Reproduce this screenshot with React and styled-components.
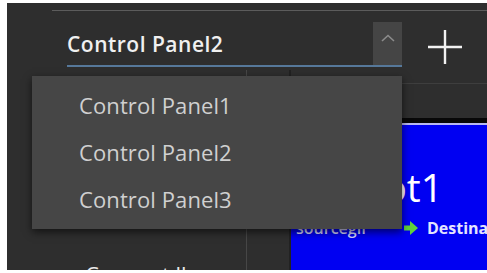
import styled, { createGlobalStyle } from "styled-components";

const Global = createGlobalStyle`
  html, body {
    margin: 0;
    padding: 0;
    background: #fff;
    overflow: hidden;
  }
  body {
    font-family: "Open Sans", "Noto Sans", sans-serif;
  }
`;

const panels = ["Control Panel1", "Control Panel2", "Control Panel3"];

function App() {
  return (
    <>
      <Global />
      <Frame>
        <Header>
          <Combo>
            <ComboText>Control Panel2</ComboText>
            <ChevronBox>
              <svg width="14" height="8" viewBox="0 0 14 8">
                <polyline points="1,7 7,1.5 13,7" fill="none" stroke="#8c8c8c" strokeWidth="1.6" />
              </svg>
            </ChevronBox>
          </Combo>
          <AddButton>
            <svg width="36" height="36" viewBox="0 0 36 36">
              <line x1="18" y1="1" x2="18" y2="35" stroke="#f2f2f2" strokeWidth="2.4" />
              <line x1="1" y1="18" x2="35" y2="18" stroke="#f2f2f2" strokeWidth="2.4" />
            </svg>
          </AddButton>
        </Header>
        <Body>
          <Sidebar>
            <SideLabel>Connect llo</SideLabel>
          </Sidebar>
          <Gutter />
          <Canvas>
            <CanvasTop />
            <BlackBand />
            <Blue>
              <NodeTitle>Robot1</NodeTitle>
              <NodeRoute>
                <Source>sourcegif</Source>
                <Arrow width="14" height="14" viewBox="0 0 14 14">
                  <polygon points="0,4.5 6,4.5 6,0 14,7 6,14 6,9.5 0,9.5" fill="#62d13c" />
                </Arrow>
                <span>Destination</span>
              </NodeRoute>
            </Blue>
          </Canvas>
        </Body>
        <Popup>
          {panels.map((p) => (
            <PopupItem key={p}>{p}</PopupItem>
          ))}
        </Popup>
      </Frame>
    </>
  );
}

const Frame = styled.div`
  position: relative;
  margin: 3px 0 0 7px;
  width: 480px;
  height: 267px;
  background: #2e2e2e;
  display: flex;
  flex-direction: column;
  overflow: hidden;
`;

const Header = styled.div`
  margin: 7px 0 0 45px;
  border-top: 1px solid #5c5c5c;
  padding: 11px 0 0 15px;
  height: 48px;
  display: flex;
  align-items: flex-start;
`;

const Combo = styled.div`
  width: 335px;
  height: 43px;
  border-bottom: 2px solid #56789a;
  display: flex;
  align-items: stretch;
`;

const ComboText = styled.div`
  flex: 1;
  display: flex;
  align-items: center;
  font-size: 21px;
  font-weight: 600;
  color: #f0f0f0;
  letter-spacing: 0.5px;
`;

const ChevronBox = styled.div`
  width: 29px;
  background: #454545;
  display: flex;
  justify-content: center;
  padding-top: 12px;
  box-sizing: border-box;
`;

const AddButton = styled.div`
  margin: 7px 0 0 25px;
  width: 36px;
  height: 36px;
  display: flex;
`;

const Body = styled.div`
  flex: 1;
  display: flex;
  min-height: 0;
`;

const Sidebar = styled.div`
  flex: 0 0 240px;
  border-right: 1px solid #474747;
  display: flex;
  flex-direction: column;
  justify-content: flex-end;
  padding-left: 78px;
  box-sizing: border-box;
  white-space: nowrap;
`;

const SideLabel = styled.div`
  font-size: 22px;
  color: #e8e8e8;
  line-height: 1;
  margin-bottom: -15px;
`;

const Gutter = styled.div`
  flex: 0 0 42px;
  border-right: 2px solid #222;
`;

const Canvas = styled.div`
  flex: 1;
  min-width: 0;
  overflow: hidden;
  display: flex;
  flex-direction: column;
`;

const CanvasTop = styled.div`
  height: 13px;
  border-bottom: 1px solid #3e3e3e;
  margin-bottom: 34px;
`;

const BlackBand = styled.div`
  height: 5px;
  background: #080808;
  border-bottom: 2px solid #b8b8f0;
`;

const Blue = styled.div`
  flex: 1;
  background: #0000f2;
  padding: 40px 0 0 5px;
  color: #fff;
`;

const NodeTitle = styled.div`
  font-size: 39px;
  line-height: 44px;
  padding-left: 16px;
`;

const NodeRoute = styled.div`
  display: flex;
  align-items: center;
  gap: 9px;
  margin-top: 8px;
  font-size: 16px;
  font-weight: 700;
  color: #e4e4ff;
  white-space: nowrap;
`;

const Source = styled.span`
  flex: 0 0 99px;
  font-weight: 600;
  color: #d4d4ff;
`;

const Arrow = styled.svg`
  flex: 0 0 14px;
`;

const Popup = styled.div`
  position: absolute;
  left: 25px;
  top: 73px;
  width: 370px;
  height: 153px;
  padding-top: 5px;
  box-sizing: border-box;
  background: #464646;
  box-shadow: 0 3px 8px rgba(0, 0, 0, 0.6);
`;

const PopupItem = styled.div`
  height: 47px;
  display: flex;
  align-items: center;
  padding-left: 47px;
  font-size: 22px;
  color: #d0d0d0;
  letter-spacing: 0.1px;
`;

export default App;
